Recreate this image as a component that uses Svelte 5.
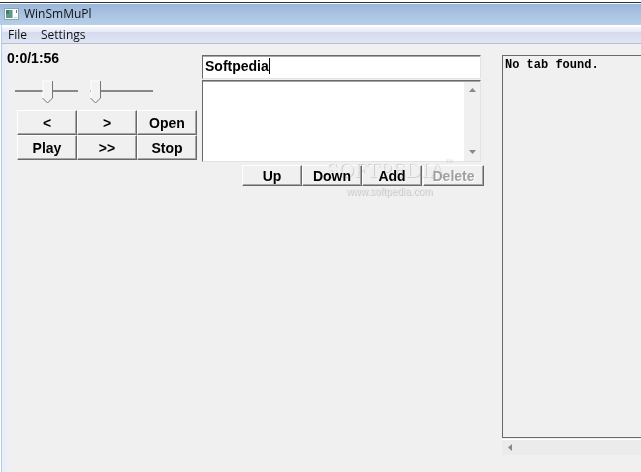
<script>
    let menus = ['File', 'Settings'];
    let transport = ['<', '>', 'Open', 'Play', '>>', 'Stop'];
    let listActions = ['Up', 'Down', 'Add', 'Delete'];

    let time = '0:0/1:56';
    let volume = 53;
    let position = 0;
    let entry = 'Softpedia';
    let playlist = '';
    let tabText = 'No tab found.';
</script>

<div class="window">
    <header class="titlebar">
        <svg class="app-icon" width="15" height="12" viewBox="0 0 15 12" aria-hidden="true">
            <rect x="0.5" y="0.5" width="14" height="11" fill="#fbfdfc" stroke="#8fa5a5" />
            <rect x="2" y="2" width="6" height="8" fill="#5c9a86" />
            <rect x="2" y="2" width="3" height="4" fill="#3f7a7c" />
            <rect x="8" y="2" width="1" height="8" fill="#a8c8be" />
            <path d="M12.5 2v3" stroke="#567b84" />
            <path d="M10 9.5h3" stroke="#c3d1d0" />
        </svg>
        <h1>WinSmMuPl</h1>
    </header>

    <nav class="menubar">
        {#each menus as menu}
            <button type="button">{menu}</button>
        {/each}
    </nav>

    <main>
        <section class="player">
            <p class="time">{time}</p>
            <div class="sliders">
                <input type="range" min="0" max="100" aria-label="Volume" bind:value={volume} />
                <input type="range" min="0" max="100" aria-label="Position" bind:value={position} />
            </div>
            <div class="transport">
                {#each transport as label}
                    <button type="button" class="btn">{label}</button>
                {/each}
            </div>
        </section>

        <section class="playlist">
            <div class="entry">
                <input type="text" aria-label="Entry name" bind:value={entry} />
                <span class="caret"></span>
            </div>
            <div class="list">
                <textarea aria-label="Playlist" bind:value={playlist}></textarea>
                <div class="vscroll">
                    <svg width="7" height="4" viewBox="0 0 7 4"><path d="M0 4L3.5 0L7 4z" fill="#888" /></svg>
                    <svg width="7" height="4" viewBox="0 0 7 4"><path d="M0 0L3.5 4L7 0z" fill="#888" /></svg>
                </div>
            </div>
            <div class="actions">
                {#each listActions as label}
                    <button type="button" class="btn" disabled={label === 'Delete'}>{label}</button>
                {/each}
            </div>
            <div class="watermark">
                <span class="mark">SOFTPEDIA<sup>™</sup></span>
                <span class="site">www.softpedia.com</span>
            </div>
        </section>

        <section class="tab">
            <pre>{tabText}</pre>
            <div class="hscroll">
                <svg width="4" height="7" viewBox="0 0 4 7"><path d="M4 0L0 3.5L4 7z" fill="#888" /></svg>
            </div>
        </section>
    </main>
</div>

<style>
    :global(body) {
        margin: 0;
        background: #f0f0f0;
    }

    .window {
        display: flex;
        flex-direction: column;
        box-sizing: border-box;
        min-height: 100vh;
        overflow: hidden;
        border-top: 2px solid #fff;
        background: linear-gradient(to right, #fff 1px, #b9cbe2 1px, #b9cbe2 2px, #e6eef8 2px, #f1f0f2 10px, #f0f0f0 18px);
        font-family: "Liberation Sans", Arial, sans-serif;
    }

    .titlebar {
        display: flex;
        align-items: center;
        gap: 5px;
        height: 22px;
        padding-left: 4px;
        border-top: 1px solid #2c3238;
        box-shadow: inset 0 1px #f4f8fc;
        background: linear-gradient(#9ab6d8, #b7cfe9);
    }

    .titlebar h1 {
        margin: 0;
        font: 12px/22px "Open Sans", "Noto Sans", sans-serif;
        color: #111;
    }

    .menubar {
        display: flex;
        gap: 14px;
        height: 16px;
        margin-left: 2px;
        padding: 0 6px;
        border-top: 2px solid #fff;
        border-bottom: 1px solid #b9bfd3;
        background: linear-gradient(#f5f7fc, #e6eaf5 30%, #d5dbee 31%, #dfe5f4);
    }

    .menubar button {
        padding: 0;
        border: 0;
        background: none;
        font: 12px/16px "Open Sans", "Noto Sans", sans-serif;
        color: #111;
    }

    main {
        flex: 1;
        display: grid;
        grid-template-columns: 195px 282px 1fr;
        padding: 7px 0 17px 7px;
    }

    .time {
        margin: 0;
        font-size: 14px;
        line-height: 15px;
        font-weight: bold;
    }

    .sliders {
        display: flex;
        gap: 12px;
        margin: 14px 0 0 8px;
    }

    .sliders input {
        appearance: none;
        width: 63px;
        height: 24px;
        margin: 0;
        background: linear-gradient(#888, #888) 0 10px / 100% 2px no-repeat;
    }

    .sliders input::-webkit-slider-thumb {
        appearance: none;
        width: 12px;
        height: 24px;
        background: url("data:image/svg+xml,%3Csvg xmlns='http://www.w3.org/2000/svg' width='12' height='24'%3E%3Cpath d='M1 1h10v17l-5 5l-5-5z' fill='%23f2f2f2'/%3E%3Cpath d='M1 18V1h9' fill='none' stroke='%23fff'/%3E%3Cpath d='M10.5 1v17l-5 5l-5-5' fill='none' stroke='%23777'/%3E%3C/svg%3E");
    }

    .transport {
        display: grid;
        grid-template-columns: repeat(3, 60px);
        grid-auto-rows: 25px;
        margin: 6px 0 0 10px;
    }

    .btn {
        padding: 0;
        border: 1px solid;
        border-color: #fff #696969 #696969 #fff;
        box-shadow: inset -1px -1px #a6a6a6;
        background: #f0f0f0;
        font: bold 14px "Liberation Sans", Arial, sans-serif;
        color: #000;
    }

    .btn:disabled {
        color: #a0a0a0;
        text-shadow: 1px 1px #fff;
    }

    .playlist {
        position: relative;
        padding-top: 4px;
    }

    .entry {
        position: relative;
    }

    .entry input,
    .list {
        box-sizing: border-box;
        width: 279px;
        border: 1px solid;
        border-color: #696969 #e3e3e3 #e3e3e3 #696969;
        box-shadow: inset 0 1px #a6a6a6;
        background: #fff;
    }

    .entry input {
        display: block;
        height: 24px;
        padding: 0 2px 2px;
        outline: none;
        font: bold 14px "Liberation Sans", Arial, sans-serif;
    }

    .caret {
        position: absolute;
        top: 3px;
        left: 67px;
        width: 1px;
        height: 16px;
        background: #000;
    }

    .list {
        display: flex;
        height: 82px;
        margin-top: 1px;
    }

    .list textarea {
        flex: 1;
        min-width: 0;
        padding: 2px;
        border: 0;
        outline: none;
        resize: none;
        background: none;
        font: bold 14px "Liberation Sans", Arial, sans-serif;
    }

    .vscroll {
        display: flex;
        flex-direction: column;
        justify-content: space-between;
        align-items: center;
        width: 16px;
        margin-top: 1px;
        padding: 6px 0 7px;
        box-sizing: border-box;
        background: #f0f0f0;
    }

    .actions {
        display: grid;
        grid-template-columns: repeat(4, 60px);
        grid-auto-rows: 21px;
        margin: 3px 0 0 40px;
    }

    .actions .btn:last-child {
        margin: 0 -2px 0 1px;
    }

    .watermark {
        position: absolute;
        top: 107px;
        left: 124px;
        display: flex;
        flex-direction: column;
        align-items: center;
        pointer-events: none;
        mix-blend-mode: darken;
        color: #f0f0f0;
        text-shadow: 1px 1px #d0d0d0;
    }

    .mark {
        font: 22px/24px "Liberation Serif", "Times New Roman", serif;
    }

    .mark sup {
        font-size: 8px;
        line-height: 8px;
        vertical-align: top;
    }

    .site {
        font-size: 10px;
        line-height: 20px;
        color: #e6e6e6;
        text-shadow: 1px 1px #c8c8c8;
    }

    .tab {
        display: flex;
        flex-direction: column;
        min-width: 0;
        padding: 4px 0 0 18px;
    }

    .tab pre {
        flex: 1;
        margin: 0;
        padding: 2px;
        border: 1px solid #696969;
        border-right: 0;
        background: #f0f0f0;
        font: bold 12px/14px "Liberation Mono", "Courier New", monospace;
    }

    .hscroll {
        display: flex;
        align-items: center;
        height: 15px;
        margin-top: 1px;
        padding-left: 6px;
        border-top: 1px solid #fff;
        background: #ebebeb;
    }
</style>
